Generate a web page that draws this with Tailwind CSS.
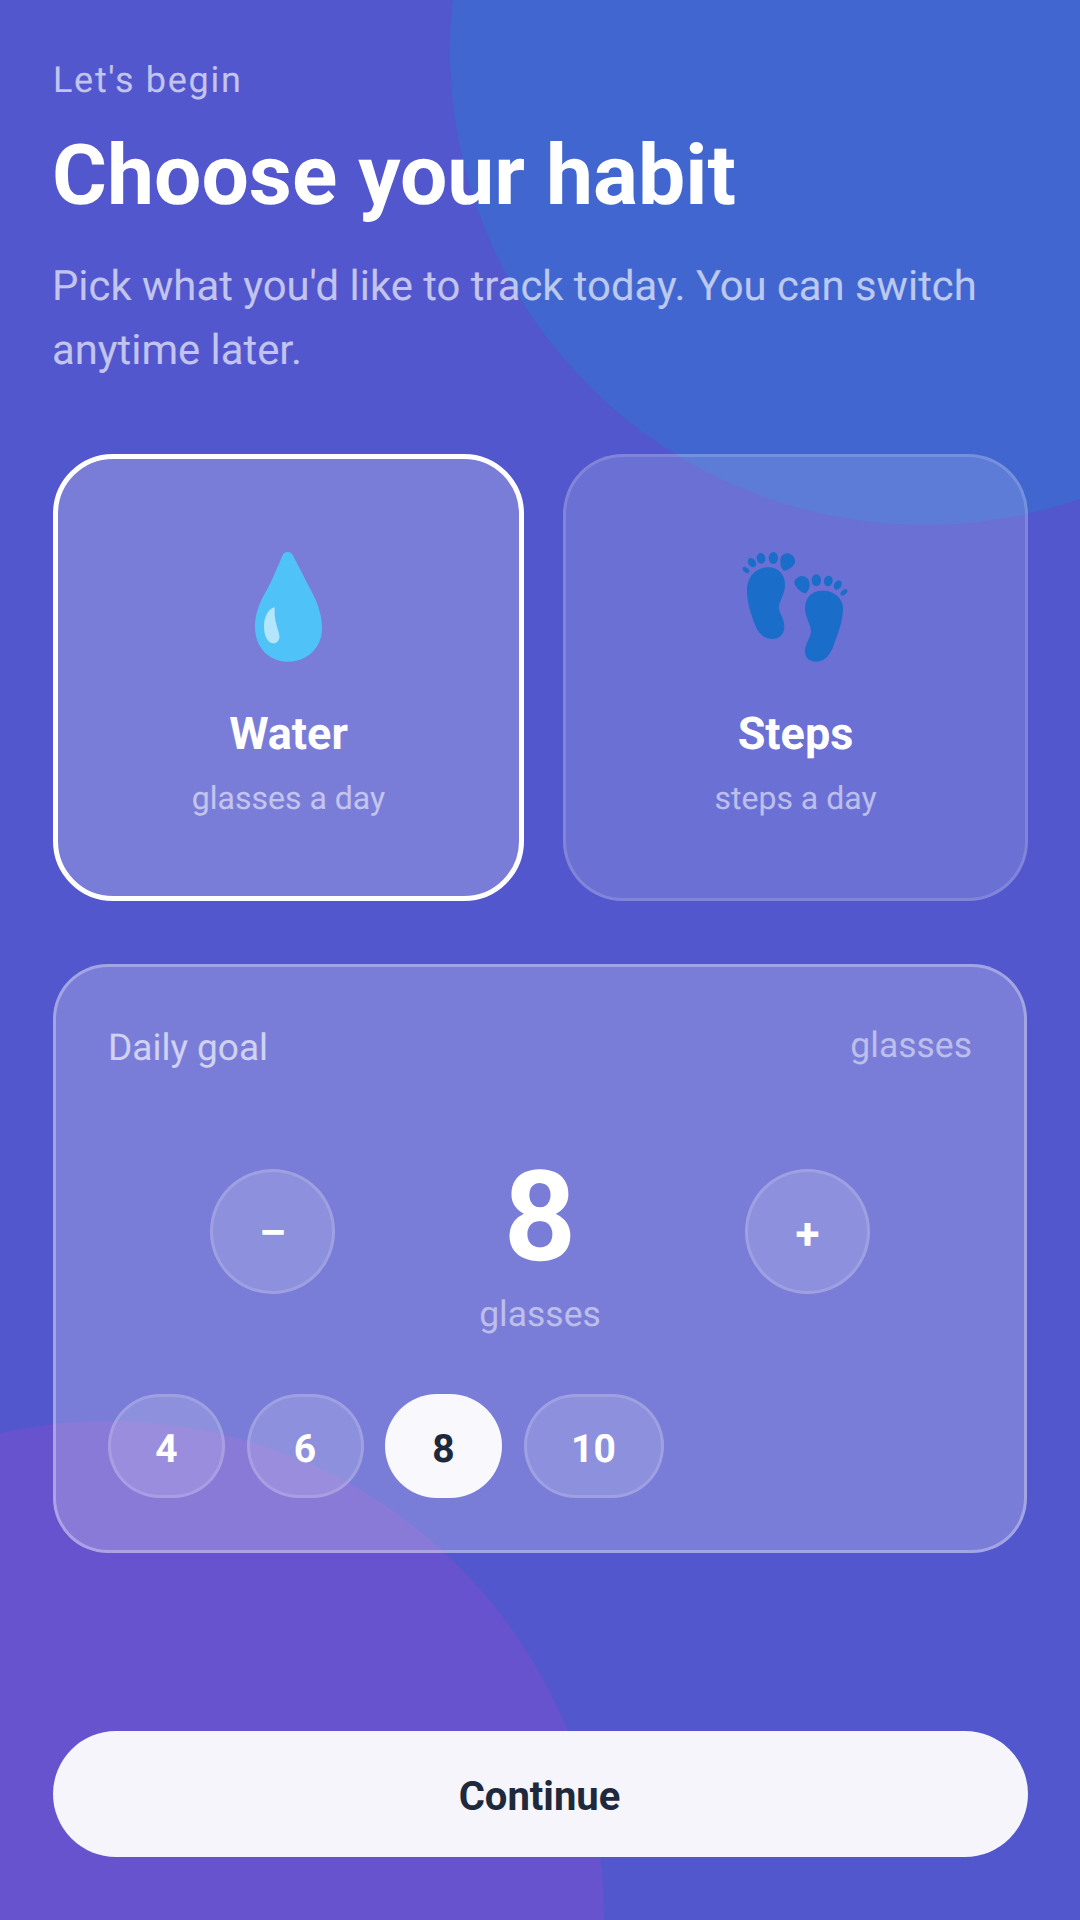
<!doctype html>
<html><head><meta charset="utf-8"><script src="https://cdn.jsdelivr.net/npm/@tailwindcss/browser@4"></script></head>
<body>
<div class="relative w-[1080px] h-[1920px] overflow-hidden bg-[#5257cd] font-['Roboto',sans-serif] text-white [text-rendering:geometricPrecision]">
  <div class="absolute left-[450px] top-[-425px] w-[950px] h-[950px] rounded-full bg-[#4166d0]"></div>
  <div class="absolute left-[-388px] top-[1421px] w-[992px] h-[992px] rounded-full bg-[#6753cd]"></div>
  <div class="relative flex flex-col h-full px-[53px] pt-[54px] pb-[63px]">
    <div class="text-[36px] leading-[52px] tracking-[1.7px] text-white/65">Let's begin</div>
    <h1 class="mt-[22px] ml-[-1px] text-[84px] leading-[96px] font-bold">Choose your habit</h1>
    <p class="mt-[31px] ml-[-1px] text-[41.8px] leading-[64px] text-white/65">Pick what you'd like to track today. You can switch anytime later.</p>
    <div class="mt-[71px] grid grid-cols-[471px_465px] gap-x-[39px]">
      <div class="h-[447px] rounded-[60px] border-[5px] border-white bg-white/23 flex flex-col items-center pt-[81px]">
        <svg class="w-[180px] h-[170px] mt-[-20px] ml-[2px]" viewBox="0 0 540 510"><path fill="#4fc3f7" d="M263 96C272 96 277 102 281 110L340 225C355 255 366 290 366 325C366 385 320 425 265 425C210 425 165 385 165 320C165 280 180 245 200 210C215 185 235 135 247 108C250 100 255 96 263 96Z"/><path fill="#b3e5fc" d="M222 262C205 268 192 290 192 320C192 350 205 370 220 370C233 370 240 358 238 345C232 320 222 300 224 268C224 263 224 262 222 262Z"/></svg>
        <div class="mt-[16px] text-[45px] leading-[56px] font-bold">Water</div>
        <div class="mt-[14px] text-[32px] leading-[44px] text-white/55">glasses a day</div>
      </div>
      <div class="h-[447px] rounded-[60px] border-[3px] border-white/15 bg-white/15 flex flex-col items-center pt-[93px]">
        <svg class="w-[170px] h-[150px] mt-[-20px]" viewBox="0 0 510 450"><g fill="#1a6dc9"><path d="M108 180C108 140 135 112 170 112C205 112 222 135 222 165C222 190 205 215 203 232C205 250 220 265 220 290C220 312 205 327 185 327C160 327 140 310 130 280C118 245 108 215 108 180Z"/><path d="M208 92C208 78 218 70 230 70C245 72 253 85 252 97C248 110 232 122 218 122C210 115 208 105 208 92Z"/><ellipse cx="187" cy="84" rx="14" ry="18"/><ellipse cx="150" cy="85" rx="13" ry="16" transform="rotate(-10 150 85)"/><ellipse cx="123" cy="98" rx="11" ry="15" transform="rotate(-35 123 98)"/><ellipse cx="105" cy="120" rx="7" ry="12" transform="rotate(-50 105 120)"/><path d="M396 235C396 205 370 182 335 182C300 182 282 205 282 235C282 260 300 285 300 305C298 325 282 340 282 365C282 385 298 395 317 395C340 395 358 378 370 340C385 300 396 270 396 235Z"/><path d="M296 162C296 148 285 138 272 138C258 140 250 150 250 158C252 172 270 188 285 190C292 182 296 175 296 162Z"/><ellipse cx="316" cy="151" rx="14" ry="18"/><ellipse cx="352" cy="153" rx="13" ry="16" transform="rotate(10 352 153)"/><ellipse cx="380" cy="165" rx="11" ry="15" transform="rotate(30 380 165)"/><ellipse cx="399" cy="187" rx="7" ry="12" transform="rotate(50 399 187)"/></g></svg>
        <div class="mt-[26px] text-[45px] leading-[56px] font-bold">Steps</div>
        <div class="mt-[14px] text-[32px] leading-[44px] text-white/55">steps a day</div>
      </div>
    </div>
    <div class="mt-[63px] h-[589px] rounded-[55px] border-[3px] border-white/30 bg-white/23 pl-[52px] pr-[52px] pt-[54px]">
      <div class="flex justify-between items-start">
        <div class="pt-[2px] h-[52px] text-[37px] leading-[52px] text-white/65">Daily goal</div>
        <div class="mt-[1px] text-[35.5px] leading-[46px] text-white/50">glasses</div>
      </div>
      <div class="mt-[81px] h-[240px] px-[102px] flex justify-between items-start">
        <div class="mt-[15px] pt-[4px] w-[125px] h-[125px] rounded-full border-[3px] border-white/15 bg-white/15 flex items-center justify-center text-[42px] font-bold">–</div>
        <div class="flex flex-col items-center">
          <div class="mt-[-7px] text-[126px] leading-[140px] font-bold">8</div>
          <div class="mt-[4px] text-[35.5px] leading-[46px] text-white/50">glasses</div>
        </div>
        <div class="mt-[15px] pt-[4px] w-[125px] h-[125px] rounded-full border-[3px] border-white/15 bg-white/15 flex items-center justify-center text-[44px] font-bold">+</div>
      </div>
      <div class="flex gap-[21.5px]">
        <div class="w-[117px] h-[104px] pt-[6px] rounded-[52px] border-[3px] border-white/15 bg-white/15 flex items-center justify-center text-[39px] font-bold">4</div>
        <div class="w-[117px] h-[104px] pt-[6px] rounded-[52px] border-[3px] border-white/15 bg-white/15 flex items-center justify-center text-[39px] font-bold">6</div>
        <div class="w-[117px] h-[104px] pt-[6px] rounded-[52px] bg-[#f8f8fd] text-[#1e293b] flex items-center justify-center text-[39px] font-bold">8</div>
        <div class="w-[140px] h-[104px] pt-[6px] rounded-[52px] border-[3px] border-white/15 bg-white/15 flex items-center justify-center text-[39px] font-bold">10</div>
      </div>
    </div>
    <button class="mt-auto h-[126px] w-[975px] rounded-[63px] bg-[#f5f5fb] pt-[5px] pr-[2px] text-[#1e293b] text-[40px] font-bold">Continue</button>
  </div>
</div>
</body></html>
